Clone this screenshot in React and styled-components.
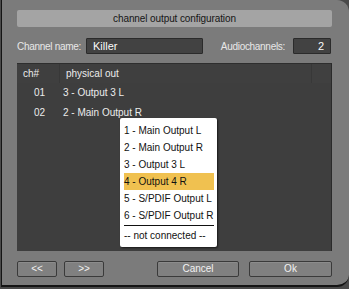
import React from 'react';
import styled, { createGlobalStyle } from 'styled-components';

const GlobalStyle = createGlobalStyle`
  html, body {
    margin: 0;
    padding: 0;
    background: #4a4a4a;
  }
  body {
    font-family: "Liberation Sans", Arial, sans-serif;
    font-size: 10px;
  }
`;

const OUTPUTS = [
  '1 - Main Output L',
  '2 - Main Output R',
  '3 - Output 3 L',
  '4 - Output 4 R',
  '5 - S/PDIF Output L',
  '6 - S/PDIF Output R',
];

const CHANNELS = [
  { id: '01', out: '3 - Output 3 L' },
  { id: '02', out: '2 - Main Output R' },
];

export default function App() {
  return (
    <>
      <GlobalStyle />
      <StyledWindow>
        <StyledTitle>channel output configuration</StyledTitle>

        <StyledFieldRow>
          <StyledLabel width={69}>Channel name:</StyledLabel>
          <StyledInput width={117}>Killer</StyledInput>
          <StyledLabel width={90} align="right">Audiochannels:</StyledLabel>
          <StyledInput width={38} align="right">2</StyledInput>
        </StyledFieldRow>

        <StyledPanel>
          <StyledHeader>
            <StyledHeadCell width={43}>ch#</StyledHeadCell>
            <StyledHeadCell grow>physical out</StyledHeadCell>
            <StyledScrollCell />
          </StyledHeader>
          {CHANNELS.map(({ id, out }) => (
            <StyledRow key={id}>
              <StyledChannel>{id}</StyledChannel>
              <span>{out}</span>
            </StyledRow>
          ))}

          <StyledMenu>
            {OUTPUTS.map((label, i) => (
              <StyledMenuItem key={label} active={i === 3}>{label}</StyledMenuItem>
            ))}
            <StyledSeparator />
            <StyledMenuItem>-- not connected --</StyledMenuItem>
          </StyledMenu>
        </StyledPanel>

        <StyledButtons>
          <StyledButton width={40}>&lt;&lt;</StyledButton>
          <StyledButton width={40}>&gt;&gt;</StyledButton>
          <StyledSpacer />
          <StyledButton width={82}>Cancel</StyledButton>
          <StyledButton width={83} gapBefore={3}>Ok</StyledButton>
        </StyledButtons>
      </StyledWindow>
    </>
  );
}

const StyledWindow = styled.div`
  box-sizing: border-box;
  width: 348px;
  height: 287px;
  margin-left: 1px;
  padding: 10px 17px 0 15px;
  background: #7b7b7b;
  border-left: 1px solid #141414;
  border-bottom: 2px solid #141414;
  border-top-right-radius: 12px;
  border-bottom-right-radius: 12px;
  display: flex;
  flex-direction: column;
  color: #ececec;
`;

const StyledTitle = styled.div`
  height: 17px;
  line-height: 17px;
  background: #a4a4a4;
  border-radius: 2px;
  color: #161616;
  text-align: center;
  letter-spacing: -0.1px;
`;

const StyledFieldRow = styled.div`
  display: flex;
  align-items: center;
  height: 16px;
  margin-top: 11px;
`;

const StyledLabel = styled.span`
  box-sizing: border-box;
  flex: none;
  width: ${p => p.width}px;
  padding-right: ${p => (p.align === 'right' ? 8 : 0)}px;
  text-align: ${p => p.align || 'left'};
  white-space: nowrap;
  letter-spacing: -0.3px;
  color: #e8e8e8;
`;

const StyledInput = styled.div`
  box-sizing: border-box;
  flex: none;
  width: ${p => p.width}px;
  height: 16px;
  line-height: 14px;
  padding: 0 6px;
  background: #424242;
  border: 1px solid #2b2b2b;
  border-radius: 1px;
  color: #fafafa;
  font-size: 11px;
  text-align: ${p => p.align || 'left'};
`;

const StyledPanel = styled.div`
  position: relative;
  height: 187px;
  margin-top: 9px;
  background: #3e3e3e;
  border-top: 1px solid #2e2e2e;
  border-right: 1px solid #2a2a2a;
`;

const StyledHeader = styled.div`
  display: flex;
  height: 19px;
`;

const StyledHeadCell = styled.div`
  box-sizing: border-box;
  width: ${p => (p.grow ? 'auto' : `${p.width}px`)};
  flex: ${p => (p.grow ? 1 : 'none')};
  padding-left: 6px;
  line-height: 19px;
  background: #3f3f3f;
  border-right: 1px solid #383838;
  color: #ececec;
`;

const StyledScrollCell = styled.div`
  width: 19px;
  background: #404040;
`;

const StyledRow = styled.div`
  display: flex;
  height: 20px;
  line-height: 20px;
  color: #ececec;
`;

const StyledChannel = styled.span`
  width: 29px;
  padding-left: 17px;
`;

const StyledMenu = styled.div`
  position: absolute;
  left: 103px;
  top: 54px;
  box-sizing: border-box;
  width: 97px;
  padding: 4px 3px 3px 4px;
  background: #fff;
  border-radius: 2px;
  box-shadow: 1px 1px 2px rgba(0, 0, 0, 0.6);
  color: #111;
`;

const StyledMenuItem = styled.div`
  height: 17px;
  line-height: 17px;
  white-space: nowrap;
  background: ${p => (p.active ? '#f0c150' : 'transparent')};
`;

const StyledSeparator = styled.div`
  height: 1px;
  margin: 1px 0 1px;
  background: #111;
`;

const StyledButtons = styled.div`
  display: flex;
  gap: 7px;
  margin-top: 10px;
`;

const StyledSpacer = styled.div`
  flex: 1;
`;

const StyledButton = styled.div`
  box-sizing: border-box;
  width: ${p => p.width}px;
  height: 16px;
  margin-left: ${p => p.gapBefore || 0}px;
  line-height: 14px;
  text-align: center;
  background: #808080;
  border: 1px solid #3a3a3a;
  border-radius: 2px;
  box-shadow: inset 0 1px 0 #8c8c8c;
  color: #f2f2f2;
`;
